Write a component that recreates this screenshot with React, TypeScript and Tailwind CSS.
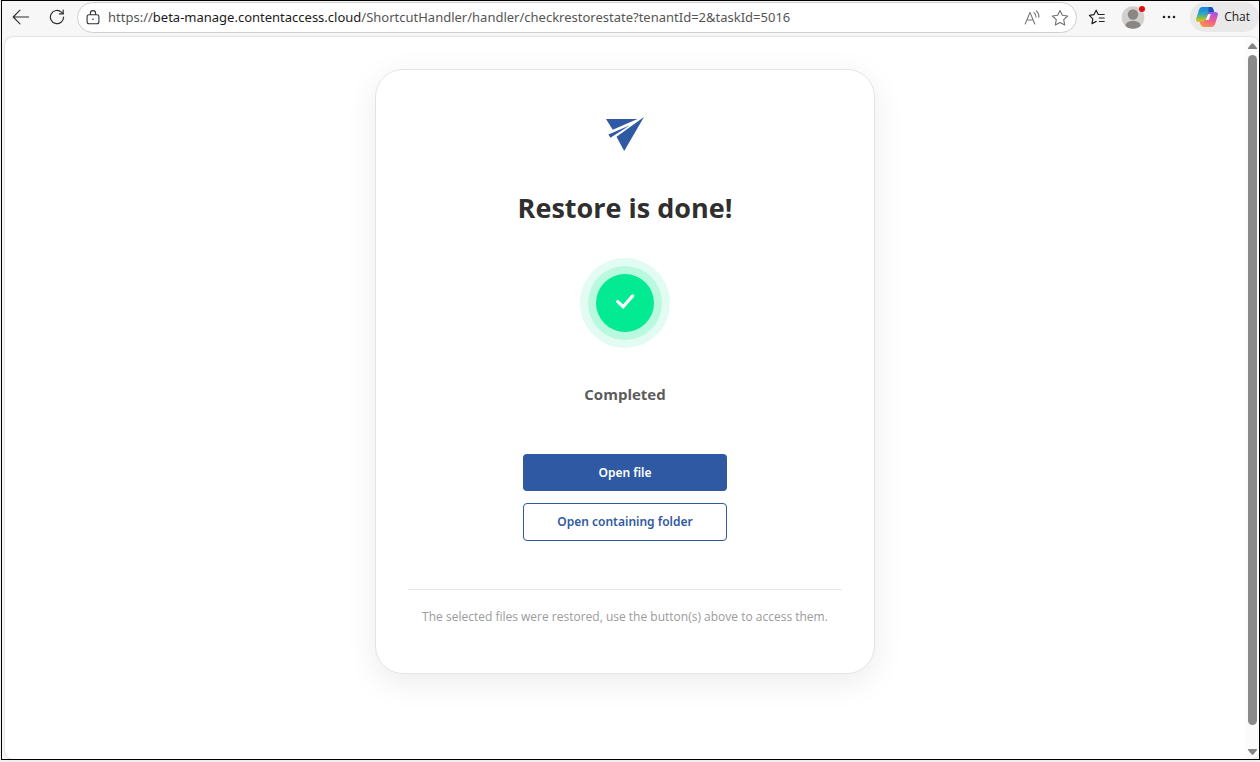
import type { ReactNode } from "react";

function IconButton({ label, children }: { label: string; children: ReactNode }) {
  return (
    <button type="button" aria-label={label} className="flex size-6 shrink-0 items-center justify-center text-[#2f2f2f]">
      {children}
    </button>
  );
}

function BackIcon() {
  return (
    <svg width="18" height="16" viewBox="0 0 18 16" fill="none" stroke="currentColor" strokeWidth="1.1" strokeLinecap="round" strokeLinejoin="round">
      <path d="M8 1.2 1.2 8 8 14.8M1.2 8H16.6" />
    </svg>
  );
}

function ReloadIcon() {
  return (
    <svg width="16" height="16" viewBox="0 0 16 16" fill="none" stroke="currentColor" strokeWidth="1.2" strokeLinecap="round" strokeLinejoin="round">
      <path d="M14.6 8a6.6 6.6 0 1 1-2.2-4.9L14 4.7" />
      <path d="M14.2 1.2v3.7h-3.8" />
    </svg>
  );
}

function LockIcon() {
  return (
    <svg width="14" height="16" viewBox="0 0 14 16" fill="none" stroke="#333" strokeWidth="1.1" className="shrink-0">
      <rect x="1.1" y="4.8" width="11.8" height="9" rx="2" />
      <path d="M4.4 4.8V3.200a2.6 2.6 0 0 1 5.2 0v1.6" />
      <circle cx="7" cy="9.300" r="0.8" fill="#333" stroke="none" />
    </svg>
  );
}

function ReadAloudIcon() {
  return (
    <svg width="17" height="16" viewBox="0 0 17 16" fill="none" stroke="#777" strokeWidth="1.1" strokeLinecap="round" strokeLinejoin="round">
      <path d="M1.2 14 6 2.4 10.8 14M2.8 10H9.2" />
      <path d="M10 2.700a5 5 0 0 1 2 4.200M12.300.900a8 8 0 0 1 2.600 6.300" />
    </svg>
  );
}

function StarIcon() {
  return (
    <svg width="18" height="18" viewBox="0 0 18 18" fill="none" stroke="#707070" strokeWidth="1.1" strokeLinejoin="round">
      <path d="m9 1.5 2.3 4.8 5.3.7-3.9 3.7 1 5.3L9 13.5 4.3 16l1-5.3L1.4 7l5.3-.7L9 1.500Z" />
    </svg>
  );
}

function FavoritesIcon() {
  return (
    <svg width="18" height="18" viewBox="0 0 18 18" fill="none" stroke="#222" strokeWidth="1.2" strokeLinecap="round" strokeLinejoin="round">
      <path d="M8.200 13.400 4 15.700 4.800 10.800 1.400 7.400 6 6.600 8.200 2.200 10.200 6.500H16.200" />
      <path d="M11.300 10H16.200M11.300 13.500H16.200" />
    </svg>
  );
}

function ProfileIcon() {
  return (
    <svg width="24" height="24" viewBox="0 0 24 24">
      <defs>
        <clipPath id="avatar">
          <circle cx="12" cy="12.500" r="11.300" />
        </clipPath>
      </defs>
      <g clipPath="url(#avatar)">
        <rect width="24" height="24" fill="#d2d0ce" />
        <circle cx="12" cy="9.500" r="5.200" fill="#8a8684" />
        <ellipse cx="12" cy="21" rx="7.800" ry="5.200" fill="#8a8684" />
      </g>
      <circle cx="21" cy="4" r="3" fill="#e60b0b" />
    </svg>
  );
}

function CopilotIcon() {
  return (
    <svg width="22" height="20" viewBox="0 0 22 20">
      <defs>
        <linearGradient id="cool" x1="0" y1="0" x2="0" y2="1">
          <stop offset="0" stopColor="#1a7fe0" />
          <stop offset="0.400" stopColor="#22a5cf" />
          <stop offset="0.700" stopColor="#7cbb50" />
          <stop offset="1" stopColor="#f3c518" />
        </linearGradient>
        <linearGradient id="warm" x1="0.700" y1="0" x2="0.300" y2="1">
          <stop offset="0" stopColor="#a455e8" />
          <stop offset="0.500" stopColor="#ef5a91" />
          <stop offset="1" stopColor="#ff9448" />
        </linearGradient>
      </defs>
      <path d="M6 0h8.500q2.200 0 2.900 2.400l.9 3H15q-2 0-2.800 2.300l-1.800 5.500Q9.700 15 7.500 15H3Q-.7 15 .3 11.200L3 2.700Q3.800 0 6 0Z" fill="url(#cool)" />
      <path d="M12.500 0h2q2.200 0 2.900 2.400l.9 3H15q-1.600 0-2.400 1.500Z" fill="#1850bd" />
      <path d="M16 20H7.500q-2.200 0-2.900-2.400l-.9-3H7q2 0 2.800-2.300l1.800-5.500Q12.300 5 14.500 5H19q3.700 0 2.700 3.800L19 17.300Q18.200 20 16 20Z" fill="url(#warm)" />
      <path d="M12.200 7.200h2.600l-2.100 5.700H9.600Z" fill="#fff" />
    </svg>
  );
}

function BrowserBar() {
  return (
    <header className="flex h-9 items-start bg-[#f7f7f7] pt-px">
      <div className="flex h-[30px] shrink-0 items-center gap-3 pr-2 pl-[7px]">
        <IconButton label="Back"><BackIcon /></IconButton>
        <IconButton label="Reload"><ReloadIcon /></IconButton>
      </div>
      <div className="flex h-[31px] min-w-0 flex-1 items-center rounded-full border border-[#cfcfcf] bg-white pr-1 pl-2">
        <LockIcon />
        <div role="textbox" aria-label="Address" className="min-w-0 flex-1 truncate pl-2 font-['Noto_Sans',sans-serif] text-[13px] text-[#555]">
          https://<span className="text-[#1b1b1b]">beta-manage.contentaccess.cloud</span>
          /ShortcutHandler/handler/checkrestorestate?tenantId=2&amp;taskId=5016
        </div>
        <div className="flex gap-1">
          <IconButton label="Read aloud"><ReadAloudIcon /></IconButton>
          <IconButton label="Add to favorites"><StarIcon /></IconButton>
        </div>
      </div>
      <div className="flex h-[30px] shrink-0 items-center gap-3 pl-2">
        <IconButton label="Favorites"><FavoritesIcon /></IconButton>
        <IconButton label="Profile"><ProfileIcon /></IconButton>
        <IconButton label="Settings and more">
          <svg width="14" height="4" viewBox="0 0 14 4" fill="#222">
            <circle cx="2" cy="2" r="1.300" /><circle cx="7" cy="2" r="1.300" /><circle cx="12" cy="2" r="1.300" />
          </svg>
        </IconButton>
        <button type="button" className="-ml-[3px] flex h-[30px] items-center gap-1.5 rounded-full bg-[#e9e9e9] pr-[9px] pl-1.5 text-xs text-[#222]">
          <CopilotIcon />
          Chat
        </button>
      </div>
    </header>
  );
}

function Scrollbar() {
  return (
    <div aria-hidden="true" className="flex w-[14px] shrink-0 flex-col items-center justify-between bg-[#fbfbfb] pt-1.5 pb-1 pl-px">
      <svg width="9" height="6" viewBox="0 0 9 6" fill="#858585"><path d="M3.700.6Q4.500-.3 5.300.6L9 5q.2 1-.6 1H.6Q-.2 6 0 5Z" /></svg>
      <div className="my-1.5 mb-6 w-[9px] flex-1 rounded-full bg-[#8a8a8a]" />
      <svg width="9" height="6" viewBox="0 0 9 6" fill="#858585"><path d="M3.700 5.400Q4.500 6.300 5.300 5.400L9 1Q9.200 0 8.400 0H.6Q-.2 0 0 1Z" /></svg>
    </div>
  );
}

function RestoreCard() {
  return (
    <section className="flex w-full max-w-[500px] flex-col items-center rounded-[28px] border border-[#e3e4e8] bg-white px-8 pt-[46px] pb-[46px] text-center shadow-[0_8px_32px_rgba(0,0,0,0.08)]">
      <svg width="40" height="36" viewBox="0 0 40 36" fill="#2f5aa3" role="img" aria-label="Logo">
        <path d="M1 3H32.500L7.700 13.800Z" />
        <path d="M3.400 18.600 25 9.300 5.400 21.800Z" />
        <path d="M39 1 19.200 35 11.500 20.800Z" />
      </svg>
      <h1 className="mt-9 text-[27px] leading-10 font-bold text-[#2f2f2f]">Restore is done!</h1>
      <div className="mt-[30px] flex size-[90px] items-center justify-center rounded-full bg-[#e3fcf3]">
        <div className="flex size-[74px] items-center justify-center rounded-full bg-[#b9f9df]">
          <div className="flex size-[58px] items-center justify-center rounded-full bg-[#02ea92]">
            <svg width="20" height="18" viewBox="0 0 20 18" fill="none" stroke="#fff" strokeWidth="3.200" strokeLinecap="round" strokeLinejoin="miter" aria-hidden="true">
              <path d="M2.700 7.600 8.200 12.700 17.600 1.900" />
            </svg>
          </div>
        </div>
      </div>
      <p className="mt-9 text-[15px] leading-5 font-bold text-[#5c5c5c]">Completed</p>
      <div className="mt-[50px] flex w-[204px] flex-col gap-3 font-['Noto_Sans',sans-serif] text-[12px] leading-5 font-semibold">
        <button type="button" className="h-[37px] rounded-sm bg-[#2f5aa3] text-white">Open file</button>
        <button type="button" className="h-[38px] rounded-sm border border-[#2f5aa3] text-[#2f5aa3]">Open containing folder</button>
      </div>
      <p className="mt-12 w-full border-t border-[#e8e8e8] pt-[17px] text-[12px] leading-5 text-[#9b9b9b]">
        The selected files were restored, use the button(s) above to access them.
      </p>
    </section>
  );
}

export default function App() {
  return (
    <div className="flex min-h-screen flex-col bg-[#f0f0f0] pb-0.5 pl-px font-['Open_Sans','Noto_Sans',sans-serif]">
      <div className="flex flex-1 flex-col border border-black bg-[#f7f7f7]">
        <BrowserBar />
        <div className="ml-[3px] flex flex-1 overflow-hidden rounded-lg bg-white shadow-[0_0_2px_rgba(0,0,0,0.25)]">
          <main className="flex flex-1 items-start justify-center px-4 pt-8 pb-10">
            <RestoreCard />
          </main>
          <Scrollbar />
        </div>
      </div>
    </div>
  );
}
